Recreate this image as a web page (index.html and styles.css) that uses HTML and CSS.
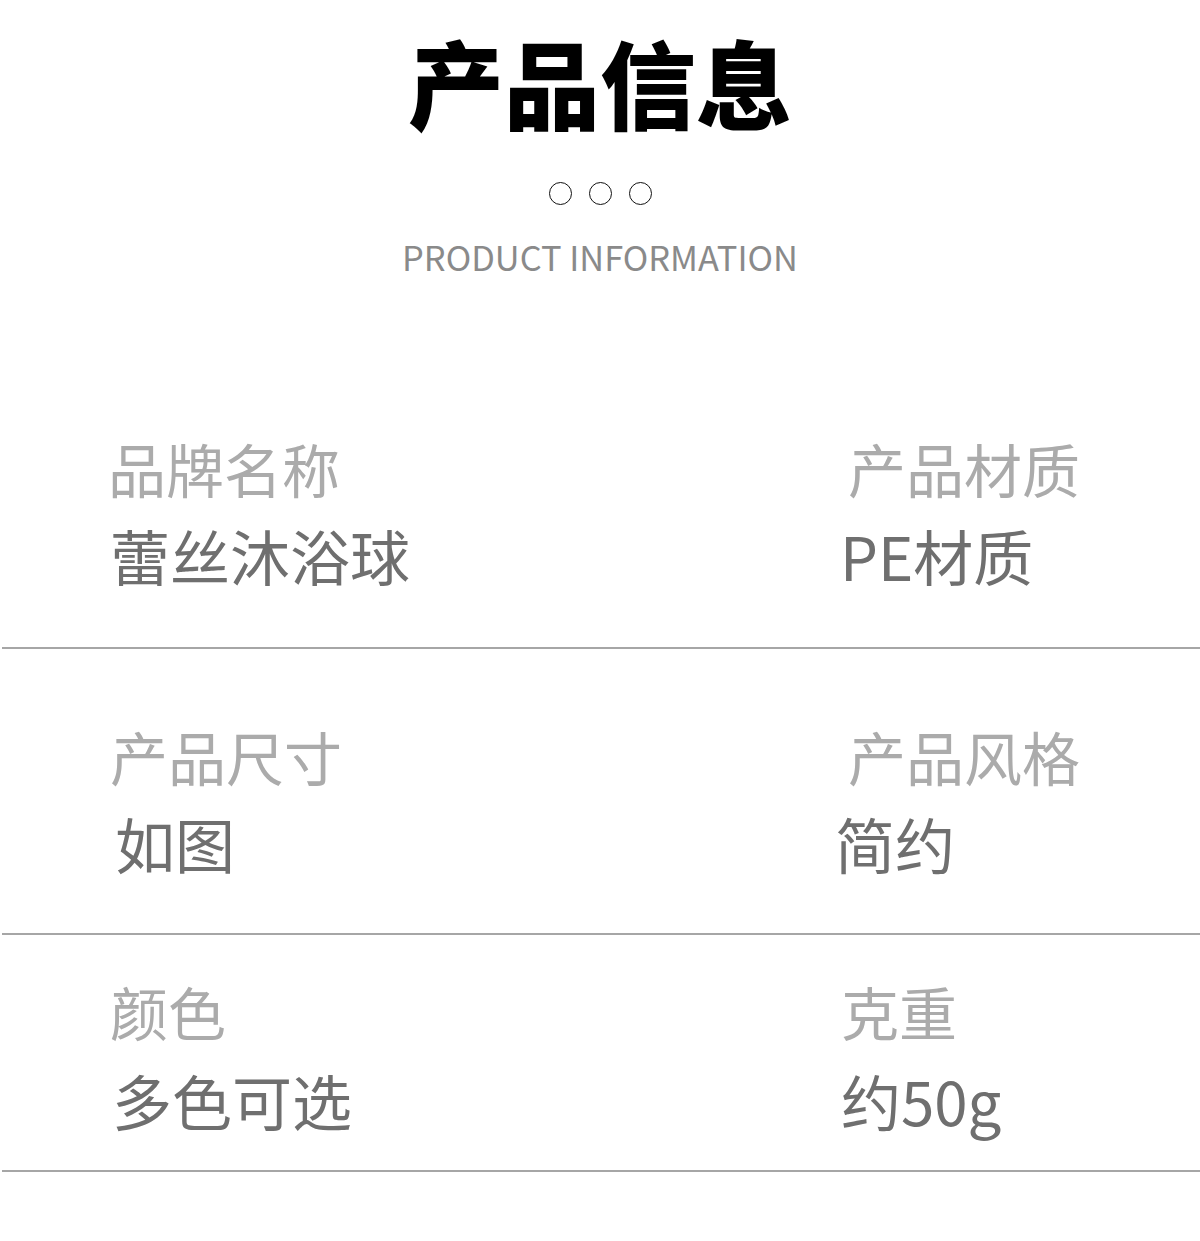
FILE: index.html
```html
<!DOCTYPE html>
<html lang="zh-CN">
<head>
<meta charset="utf-8">
<title>产品信息</title>
<link rel="stylesheet" href="styles.css">
</head>
<body>
<header class="head">
  <h1 class="title">产品信息</h1>
  <div class="dots"><span class="dot"></span><span class="dot"></span><span class="dot"></span></div>
  <p class="subtitle">PRODUCT INFORMATION</p>
</header>
<section class="specs">
  <div class="spec-row row-1">
    <div class="spec"><div class="spec-label nudge-l2">品牌名称</div><div class="spec-value">蕾丝沐浴球</div></div>
    <div class="spec"><div class="spec-label nudge-r2">产品材质</div><div class="spec-value nudge-l6">PE材质</div></div>
  </div>
  <div class="spec-row row-2">
    <div class="spec"><div class="spec-label">产品尺寸</div><div class="spec-value nudge-r5">如图</div></div>
    <div class="spec"><div class="spec-label nudge-r2">产品风格</div><div class="spec-value nudge-l11">简约</div></div>
  </div>
  <div class="spec-row row-3">
    <div class="spec"><div class="spec-label">颜色</div><div class="spec-value nudge-r2">多色可选</div></div>
    <div class="spec"><div class="spec-label nudge-l5">克重</div><div class="spec-value nudge-l5">约50g</div></div>
  </div>
</section>
</body>
</html>
```
FILE: styles.css
```css
* { box-sizing: border-box; }
html, body { margin: 0; padding: 0; background: #fff; }
body {
  width: 1200px;
  min-height: 1241px;
  font-family: "Noto Sans CJK SC", "Noto Sans", sans-serif;
}
.head {
  display: flex;
  flex-direction: column;
  align-items: center;
  padding-top: 33px;
}
.title {
  margin: 0;
  font-size: 96px;
  line-height: 1;
  font-weight: 900;
  color: #000;
  letter-spacing: 0;
}
.dots {
  display: flex;
  gap: 17px;
  margin-top: 53px;
}
.dot {
  width: 23px;
  height: 23px;
  border: 1.5px solid #111;
  border-radius: 50%;
}
.subtitle {
  margin: 34px 0 0;
  font-size: 34.4px;
  line-height: 1;
  font-weight: 400;
  color: #8a8a8a;
}
.specs {
  padding-top: 166px;
}
.spec-row {
  display: flex;
  margin-left: 2px;
  padding-left: 108px;
  border-bottom: 2px solid #a6a6a6;
}
.row-1 { padding-bottom: 62px; }
.row-2 { padding-top: 78px; padding-bottom: 60px; }
.row-3 { padding-top: 47px; padding-bottom: 40px; }
.spec {
  display: flex;
  flex-direction: column;
}
.spec:first-child { width: 736px; }
.spec-label {
  font-size: 58px;
  line-height: 1;
  color: #ababab;
}
.spec-value {
  margin-top: 28px;
  font-size: 60px;
  line-height: 1;
  color: #6f6f6f;
}
.row-3 .spec-value { margin-top: 30px; }
.nudge-l2 { margin-left: -2px; }
.nudge-l5 { margin-left: -5px; }
.nudge-l6 { margin-left: -6px; }
.nudge-l11 { margin-left: -11px; }
.nudge-r2 { margin-left: 2px; }
.nudge-r5 { margin-left: 5px; }
```
